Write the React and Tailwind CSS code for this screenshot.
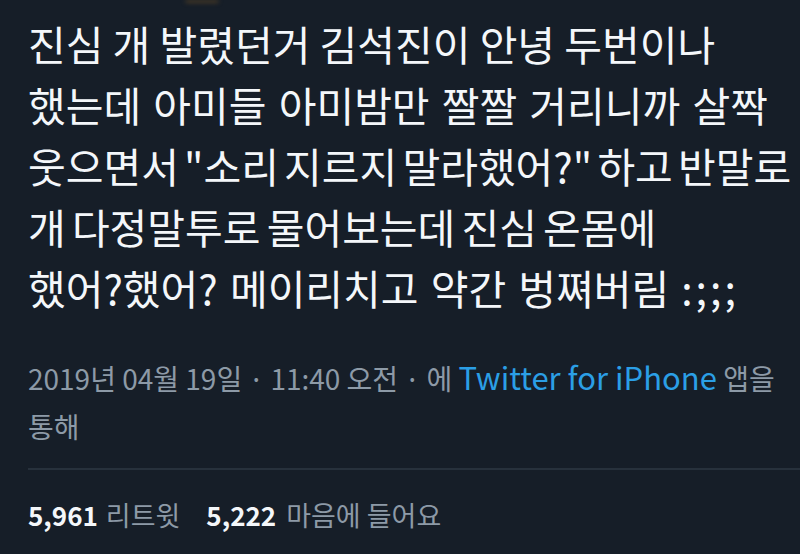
export default function App() {
    const lines = [
        { text: '진심 개 발렸던거 김석진이 안녕 두번이나', cls: '[word-spacing:0px]' },
        { text: '했는데 아미들 아미밤만 짤짤 거리니까 살짝', cls: '[word-spacing:3px]' },
        { text: '웃으면서 "소리 지르지 말라했어?" 하고 반말로', cls: '[word-spacing:-4px]' },
        { text: '개 다정말투로 물어보는데 진심 온몸에', cls: '[word-spacing:-3px]' },
        { text: '했어?했어? 메이리치고 약간 벙쪄버림', cls: '[word-spacing:3px]' },
    ]

    return (
        <div
            className="h-[554px] w-[800px] overflow-hidden bg-[#161e28] pl-[28px]"
            style={{ fontFamily: '"Noto Sans CJK KR", "Noto Sans", sans-serif' }}
        >
            <div className="ml-[157px] h-[3px] w-[34px] rounded-b-full bg-[#4a3b24] blur-[2px]" />

            <div className="pt-[10px] text-[41px] leading-[61px] text-[#f4f7fa]">
                {lines.map((line, index) => (
                    <div key={line.text} className={`whitespace-nowrap ${line.cls}`}>
                        {line.text}
                        {index === 4 && (
                            <span className="ml-[12px] tracking-[3px]">:;;;</span>
                        )}
                    </div>
                ))}
            </div>

            <div className="mt-[35px] text-[28px] leading-[48px] text-[#8d9aa7]">
                <div className="whitespace-nowrap">
                    2019년 04월 19일 · 11:40 오전 · 에{' '}
                    <span className="text-[31px] text-[#2b9fe6]">Twitter for iPhone</span> 앱을
                </div>
                <div>통해</div>
            </div>

            <div className="mt-[18px] h-[2px] w-full bg-[#27313c]" />

            <div className="mt-[29px] flex items-center leading-[32px]">
                <span className="text-[26px] font-bold text-[#f4f7fa]">5,961</span>
                <span className="ml-[8px] text-[27px] text-[#8d9aa7]">리트윗</span>
                <span className="ml-[26px] text-[26px] font-bold text-[#f4f7fa]">5,222</span>
                <span className="ml-[10px] text-[27px] text-[#8d9aa7]">마음에 들어요</span>
            </div>
        </div>
    )
}
